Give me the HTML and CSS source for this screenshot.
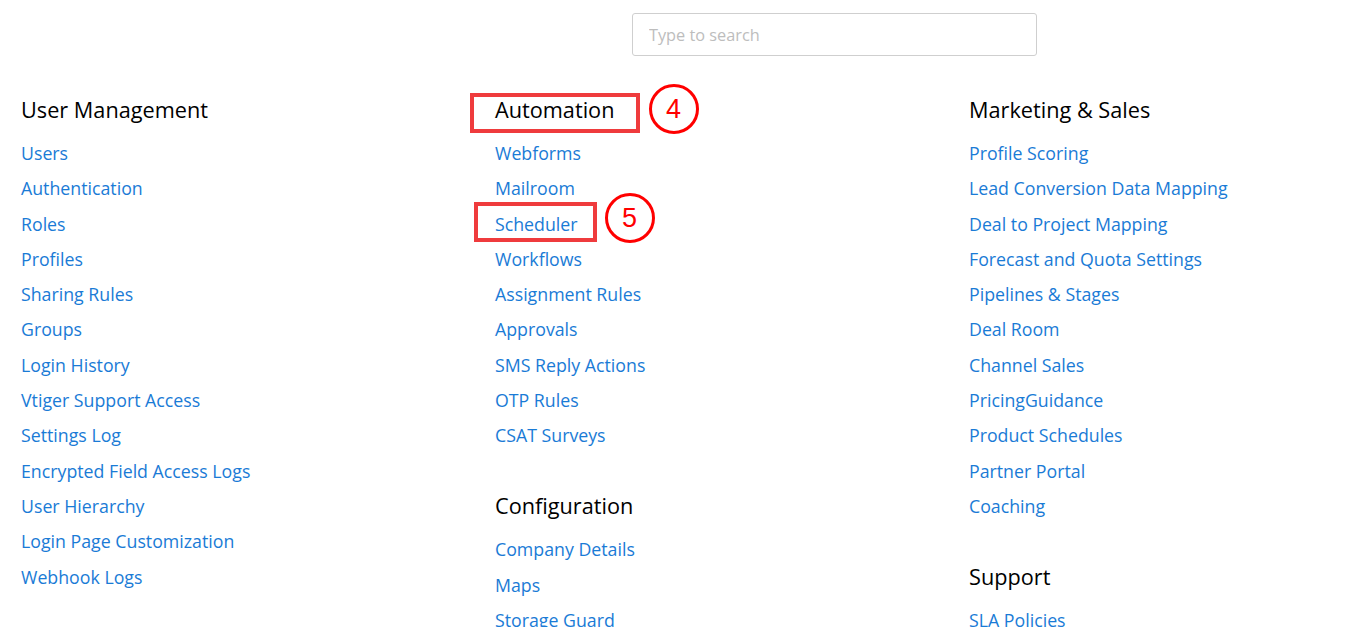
FILE: index.html
```html
<!DOCTYPE html>
<html>
<head>
<meta charset="utf-8">
<link rel="stylesheet" href="styles.css">
</head>
<body>
<div class="page">
  <div class="search-row">
    <input class="search" type="text" placeholder="Type to search">
  </div>
  <div class="columns">
    <div class="col">
      <div class="section">
        <h3 class="heading">User Management</h3>
        <ul class="links">
          <li><a>Users</a></li>
          <li><a>Authentication</a></li>
          <li><a>Roles</a></li>
          <li><a>Profiles</a></li>
          <li><a>Sharing Rules</a></li>
          <li><a>Groups</a></li>
          <li><a>Login History</a></li>
          <li><a>Vtiger Support Access</a></li>
          <li><a>Settings Log</a></li>
          <li><a>Encrypted Field Access Logs</a></li>
          <li><a>User Hierarchy</a></li>
          <li><a>Login Page Customization</a></li>
          <li><a>Webhook Logs</a></li>
        </ul>
      </div>
    </div>
    <div class="col">
      <div class="section">
        <h3 class="heading"><span class="mark mark-head">Automation<span class="badge badge-head">4</span></span></h3>
        <ul class="links">
          <li><a>Webforms</a></li>
          <li><a>Mailroom</a></li>
          <li><a class="mark mark-link">Scheduler<span class="badge badge-link">5</span></a></li>
          <li><a>Workflows</a></li>
          <li><a>Assignment Rules</a></li>
          <li><a>Approvals</a></li>
          <li><a>SMS Reply Actions</a></li>
          <li><a>OTP Rules</a></li>
          <li><a>CSAT Surveys</a></li>
        </ul>
      </div>
      <div class="section">
        <h3 class="heading">Configuration</h3>
        <ul class="links">
          <li><a>Company Details</a></li>
          <li><a>Maps</a></li>
          <li><a>Storage Guard</a></li>
        </ul>
      </div>
    </div>
    <div class="col">
      <div class="section">
        <h3 class="heading">Marketing &amp; Sales</h3>
        <ul class="links">
          <li><a>Profile Scoring</a></li>
          <li><a>Lead Conversion Data Mapping</a></li>
          <li><a>Deal to Project Mapping</a></li>
          <li><a>Forecast and Quota Settings</a></li>
          <li><a>Pipelines &amp; Stages</a></li>
          <li><a>Deal Room</a></li>
          <li><a>Channel Sales</a></li>
          <li><a>PricingGuidance</a></li>
          <li><a>Product Schedules</a></li>
          <li><a>Partner Portal</a></li>
          <li><a>Coaching</a></li>
        </ul>
      </div>
      <div class="section">
        <h3 class="heading">Support</h3>
        <ul class="links">
          <li><a>SLA Policies</a></li>
        </ul>
      </div>
    </div>
  </div>
</div>
</body>
</html>
```

FILE: styles.css
```css
html, body {
  margin: 0;
  padding: 0;
  background: #fff;
  overflow: hidden;
}
body {
  font-family: "Open Sans", "Liberation Sans", sans-serif;
  color: #000;
}
.page {
  padding: 13px 0 0 21px;
}
.search-row {
  padding-left: 611px;
}
.search {
  display: block;
  box-sizing: border-box;
  width: 405px;
  height: 43px;
  border: 1px solid #cfcfcf;
  border-radius: 3px;
  padding: 0 16px;
  font-family: "Open Sans", sans-serif;
  font-size: 16.3px;
  outline: none;
}
.search::placeholder {
  color: #bdbdbd;
}
.columns {
  display: grid;
  grid-template-columns: 474px 474px 400px;
  margin-top: 37px;
}
.section {
  margin-bottom: 32.7px;
}
.heading {
  margin: 0;
  font-size: 21.7px;
  font-weight: 400;
  line-height: 34px;
  height: 34px;
  margin-bottom: 12px;
}
.links {
  list-style: none;
  margin: 0;
  padding: 0;
}
.links li {
  height: 35.3px;
  line-height: 28px;
  font-size: 17.75px;
}
.links a {
  color: #1a7bd6;
  text-decoration: none;
}
.mark {
  position: relative;
}
.mark::before {
  content: "";
  position: absolute;
  border: 4px solid #ef3b3d;
}
.mark-head::before {
  left: -25px;
  top: -2px;
  width: 162px;
  height: 32px;
}
.mark-link::before {
  left: -21px;
  top: -9.5px;
  width: 115px;
  height: 32px;
}
.badge {
  position: absolute;
  width: 44px;
  height: 44px;
  border: 3px solid #f00;
  border-radius: 50%;
  color: #f00;
  font-family: "Liberation Sans", Arial, sans-serif;
  font-size: 27px;
  line-height: 44px;
  text-align: center;
}
.badge-head {
  left: 153.5px;
  top: -11px;
}
.badge-link {
  left: 109.5px;
  top: -18.5px;
}
```
